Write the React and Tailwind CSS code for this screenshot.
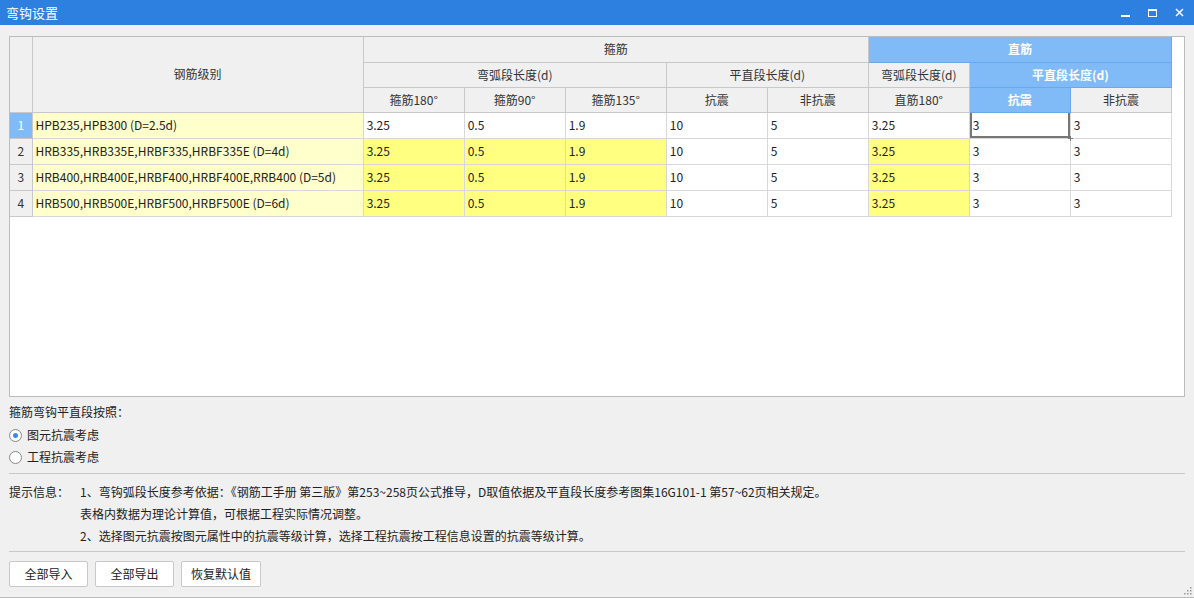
import React from "react";

const rows = [
  ["HPB235,HPB300 (D=2.5d)", false],
  ["HRB335,HRB335E,HRBF335,HRBF335E (D=4d)", true],
  ["HRB400,HRB400E,HRBF400,HRBF400E,RRB400 (D=5d)", true],
  ["HRB500,HRB500E,HRBF500,HRBF500E (D=6d)", true],
];
const vals = ["3.25", "0.5", "1.9", "10", "5", "3.25", "3", "3"];
const yellowIdx = [0, 1, 2, 5];

export default function App() {
  const th = "border border-[#c8c8c8] bg-[#f0f0f0] text-[#333] font-normal h-[25px] p-0";
  const thb = "border border-[#6aa8ec] bg-[#80bbf8] text-white font-bold h-[25px] p-0";
  return (
    <div className="w-[1194px] h-[598px] bg-[#f0f0f0] flex flex-col text-[12px] text-[#222] overflow-hidden border-b border-[#bcbcbc]" style={{ fontFamily: '"Microsoft YaHei","Noto Sans CJK SC","Noto Sans",sans-serif' }}>
      <div className="h-[25px] bg-[#2e80e0] flex items-center justify-between px-[6px] text-white shrink-0">
        <span className="text-[13px]">弯钩设置</span>
        <div className="flex items-center gap-[18px] pr-[4px]">
          <div className="w-[9px] h-[2px] bg-white mt-[6px]" />
          <div className="w-[9px] h-[8px] border-[1.5px] border-white border-t-[2px]" />
          <svg width="9" height="9" viewBox="0 0 9 9"><path d="M1 1L8 8M8 1L1 8" stroke="white" strokeWidth="1.5" /></svg>
        </div>
      </div>
      <div className="mx-[9px] mt-[11px] h-[361px] bg-white border border-[#bcbcbc] shrink-0 overflow-hidden">
        <table className="border-collapse table-fixed" style={{ width: 1162 }}>
          <colgroup>
            <col style={{ width: 22 }} /><col style={{ width: 331 }} />
            {vals.map((_, i) => <col key={i} style={{ width: 101 }} />)}
          </colgroup>
          <thead>
            <tr>
              <th className={th + " border-t-0 border-l-0"} rowSpan={3}></th>
              <th className={th + " border-t-0"} rowSpan={3}>钢筋级别</th>
              <th className={th + " border-t-0"} colSpan={5}>箍筋</th>
              <th className={thb + " border-t-0"} colSpan={3}>直筋</th>
            </tr>
            <tr>
              <th className={th} colSpan={3}>弯弧段长度(d)</th>
              <th className={th} colSpan={2}>平直段长度(d)</th>
              <th className={th}>弯弧段长度(d)</th>
              <th className={thb} colSpan={2}>平直段长度(d)</th>
            </tr>
            <tr>
              {["箍筋180°", "箍筋90°", "箍筋135°", "抗震", "非抗震", "直筋180°"].map((t) => (
                <th key={t} className={th}>{t}</th>
              ))}
              <th className={thb}>抗震</th>
              <th className={th}>非抗震</th>
            </tr>
          </thead>
          <tbody>
            {rows.map(([name, yel], r) => (
              <tr key={r} className="h-[26px]">
                <td className={"border border-[#c8c8c8] border-l-0 text-center p-0 " + (r === 0 ? "bg-[#80bbf8] text-white border-[#6aa8ec]" : "bg-[#f0f0f0] text-[#333]")}>{r + 1}</td>
                <td className="border border-[#d8d8d8] bg-[#ffffcc] px-[3px] py-0 whitespace-nowrap">{name}</td>
                {vals.map((v, i) => (
                  <td key={i} className={"border border-[#d8d8d8] px-[3px] py-0 relative " + (yel && yellowIdx.includes(i) ? "bg-[#ffff80]" : "bg-white")}>
                    {v}
                    {r === 0 && i === 6 && (
                      <>
                        <div className="absolute inset-0 border-l-2 border-b-2 border-r-2 border-[#777] pointer-events-none" />
                        <div className="absolute right-[-3px] bottom-[-3px] w-[5px] h-[5px] bg-[#777]" />
                      </>
                    )}
                  </td>
                ))}
              </tr>
            ))}
          </tbody>
        </table>
      </div>
      <div className="px-[9px] pt-[7px] flex flex-col">
        <div className="h-[16px] leading-[16px]">箍筋弯钩平直段按照：</div>
        <div className="flex items-center gap-[5px] mt-[7px] h-[16px]">
          <span className="w-[13px] h-[13px] rounded-full border border-[#888] bg-white flex items-center justify-center"><span className="w-[5px] h-[5px] rounded-full bg-[#3c8ae6]" /></span>
          <span>图元抗震考虑</span>
        </div>
        <div className="flex items-center gap-[5px] mt-[6px] h-[16px]">
          <span className="w-[13px] h-[13px] rounded-full border border-[#888] bg-white" />
          <span>工程抗震考虑</span>
        </div>
        <div className="h-px bg-[#c8c8c8] mt-[8px]" />
        <div className="flex mt-[7px]">
          <div className="w-[71px] shrink-0 leading-[22px]">提示信息：</div>
          <div className="flex flex-col leading-[22px]">
            <div>1、弯钩弧段长度参考依据：《钢筋工手册 第三版》第253~258页公式推导，D取值依据及平直段长度参考图集16G101-1 第57~62页相关规定。</div>
            <div>表格内数据为理论计算值，可根据工程实际情况调整。</div>
            <div>2、选择图元抗震按图元属性中的抗震等级计算，选择工程抗震按工程信息设置的抗震等级计算。</div>
          </div>
        </div>
        <div className="h-px bg-[#c8c8c8] mt-[4px]" />
        <div className="flex gap-[7px] mt-[9px]">
          {["全部导入", "全部导出", "恢复默认值"].map((b) => (
            <button key={b} className="h-[26px] w-[79px] bg-white border border-[#c8c8c8] rounded-[2px] text-[12px] last:w-[80px]">{b}</button>
          ))}
        </div>
      </div>
      <div className="flex-1 relative">
        <svg className="absolute right-[2px] bottom-[2px]" width="8" height="8" viewBox="0 0 8 8"><g fill="#999"><rect x="6" y="0" width="1.5" height="1.5"/><rect x="3" y="3" width="1.5" height="1.5"/><rect x="6" y="3" width="1.5" height="1.5"/><rect x="0" y="6" width="1.5" height="1.5"/><rect x="3" y="6" width="1.5" height="1.5"/><rect x="6" y="6" width="1.5" height="1.5"/></g></svg>
      </div>
    </div>
  );
}
